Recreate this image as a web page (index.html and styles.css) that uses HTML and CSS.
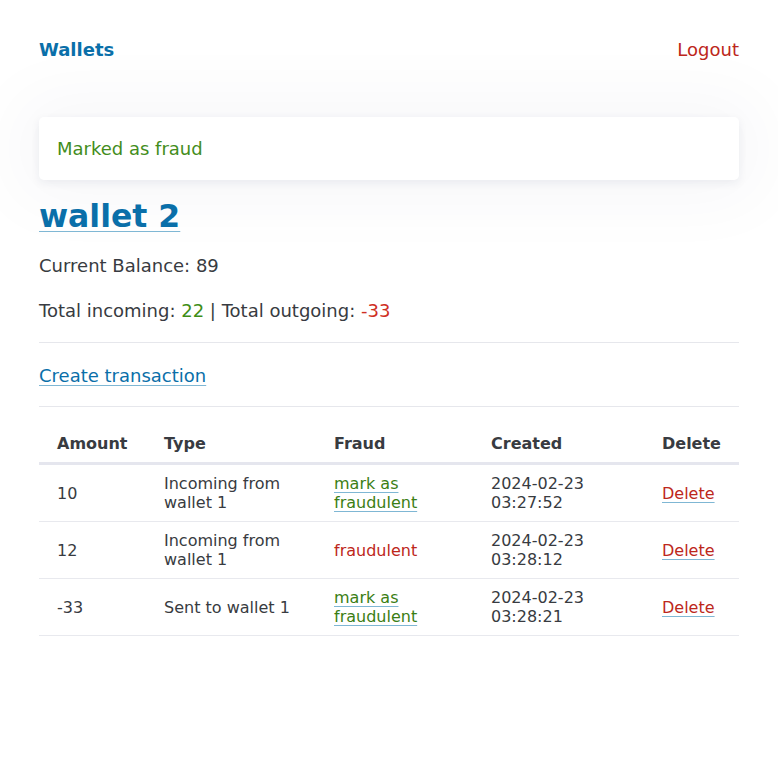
FILE: index.html
```html
<!DOCTYPE html>
<html lang="en">
<head>
<meta charset="utf-8">
<title>wallet 2</title>
<link rel="stylesheet" href="styles.css">
</head>
<body>
<div class="page">
  <nav class="nav">
    <a class="brand" href="#">Wallets</a>
    <a class="logout" href="#">Logout</a>
  </nav>

  <div class="alert">Marked as fraud</div>

  <h1 class="title"><a href="#">wallet 2</a></h1>

  <p class="line">Current Balance: 89</p>
  <p class="line">Total incoming: <span class="pos">22</span> | Total outgoing: <span class="neg">-33</span></p>

  <hr class="rule">
  <p class="line"><a class="link" href="#">Create transaction</a></p>
  <hr class="rule rule-tight">

  <table class="tx">
    <colgroup>
      <col class="c-amount"><col class="c-type"><col class="c-fraud"><col class="c-created"><col class="c-delete">
    </colgroup>
    <thead>
      <tr><th>Amount</th><th>Type</th><th>Fraud</th><th>Created</th><th>Delete</th></tr>
    </thead>
    <tbody>
      <tr>
        <td>10</td>
        <td>Incoming from wallet 1</td>
        <td><a class="mark" href="#">mark as fraudulent</a></td>
        <td>2024-02-23 03:27:52</td>
        <td><a class="del" href="#">Delete</a></td>
      </tr>
      <tr>
        <td>12</td>
        <td>Incoming from wallet 1</td>
        <td><span class="fraud">fraudulent</span></td>
        <td>2024-02-23 03:28:12</td>
        <td><a class="del" href="#">Delete</a></td>
      </tr>
      <tr>
        <td>-33</td>
        <td>Sent to wallet 1</td>
        <td><a class="mark" href="#">mark as fraudulent</a></td>
        <td>2024-02-23 03:28:21</td>
        <td><a class="del" href="#">Delete</a></td>
      </tr>
    </tbody>
  </table>
</div>
</body>
</html>
```

FILE: styles.css
```css
html, body {
  margin: 0;
  padding: 0;
  background: #ffffff;
}

body {
  font-family: "DejaVu Sans", sans-serif;
  font-size: 18px;
  line-height: 27px;
  color: #383b41;
}

.page {
  max-width: 700px;
  margin: 0 auto;
  padding-top: 36px;
}

a {
  text-decoration-color: rgba(0, 112, 170, 0.5);
  text-decoration-thickness: 1px;
  text-underline-offset: 3px;
}

.nav {
  display: flex;
  justify-content: space-between;
  align-items: center;
  height: 27px;
}

.brand {
  color: #0a6fa9;
  font-weight: bold;
  text-decoration: none;
}

.logout {
  color: #bd271b;
  text-decoration: none;
}

.alert {
  margin-top: 54px;
  background: #ffffff;
  border-radius: 5px;
  padding: 20px 18px;
  line-height: 23px;
  font-size: 18px;
  color: #438d1c;
  box-shadow: 0 3px 10px rgba(30, 40, 90, 0.07), 0 0 70px 20px rgba(30, 40, 90, 0.035);
}

.title {
  margin: 17px 0 0;
  font-size: 31.5px;
  line-height: 38px;
  font-weight: bold;
}

.title a {
  color: #0a6fa9;
  text-underline-offset: 4px;
}

.line {
  margin: 18px 0 0;
}

.title + .line {
  margin-top: 17px;
}

.pos {
  color: #3f8e17;
}

.neg {
  color: #cf2f24;
}

.rule {
  border: 0;
  border-top: 1px solid #e6e7ec;
  margin: 18px 0 0;
  height: 0;
}

.rule-tight {
  margin-top: 17px;
}

.rule + .line {
  margin-top: 19px;
}

.link {
  color: #0a6fa9;
}

.tx {
  width: 100%;
  margin-top: 18px;
  border-collapse: collapse;
  table-layout: fixed;
  font-size: 16px;
  line-height: 19px;
}

.c-amount { width: 107px; }
.c-type { width: 170px; }
.c-fraud { width: 157px; }
.c-created { width: 171px; }
.c-delete { width: 95px; }

.tx th {
  text-align: left;
  font-weight: bold;
  color: #383b41;
  padding: 9px 18px;
  border-bottom: 3px solid #e5e6ee;
}

.tx td {
  padding: 9px 18px;
  border-bottom: 1px solid #e8e9ee;
  vertical-align: middle;
}

.mark {
  color: #3b7e14;
}

.fraud {
  color: #bd271b;
}

.del {
  color: #bd271b;
}
```
